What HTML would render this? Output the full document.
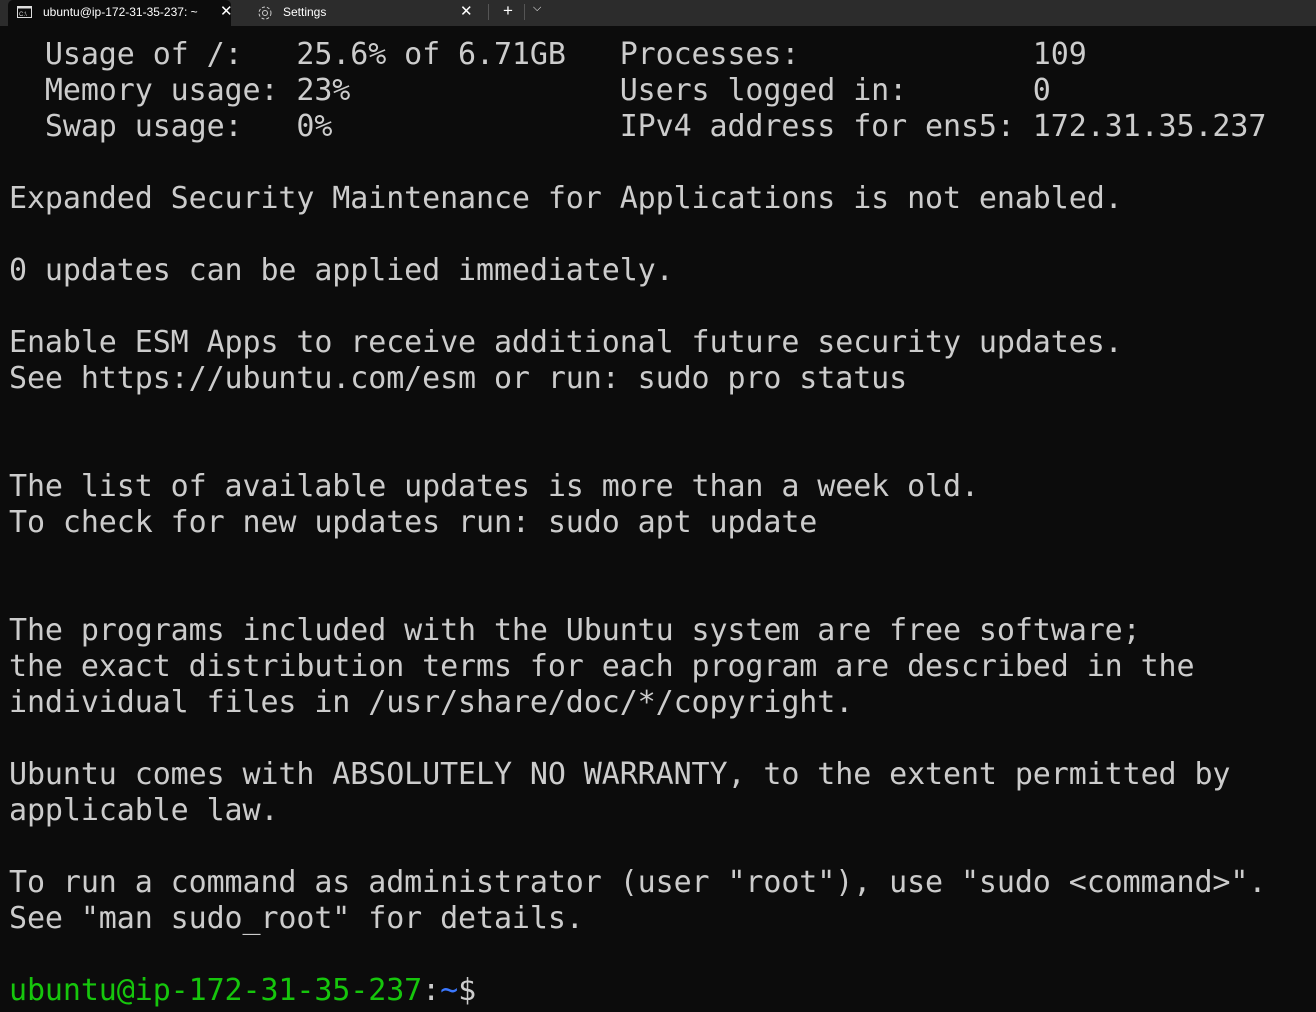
<!DOCTYPE html>
<html><head><style>
html,body{margin:0;padding:0;background:#0c0c0c;width:1316px;height:1012px;overflow:hidden}
.bar{position:absolute;left:0;top:0;width:1316px;height:26px;background:#2c2c2c;font-family:"Liberation Sans",sans-serif;font-size:12px;color:#fff}
.tab1{position:absolute;left:8px;top:0;width:223px;height:27px;background:#0c0c0c;border-radius:5px 5px 0 0}
.t{position:absolute;top:5px;white-space:nowrap}
pre{position:absolute;left:9px;top:37px;margin:0;font-family:"DejaVu Sans Mono","Liberation Mono",monospace;font-size:30px;letter-spacing:-0.1px;line-height:36px;color:#cccccc}
.g{color:#16c60c}.b{color:#3b78ff}
</style></head><body>
<div class="bar">
<div class="tab1"></div>
<svg style="position:absolute;left:17px;top:6px" width="15" height="12"><rect x="0.5" y="0.5" width="14" height="11" fill="none" stroke="#ddd"/><rect x="0.5" y="0.5" width="14" height="2" fill="#ddd"/><text x="2" y="10" font-size="6" fill="#ddd" font-family="Liberation Sans">C:\_</text></svg>
<span class="t" style="left:43px">ubuntu@ip-172-31-35-237: ~</span>
<span class="t" style="left:220px;top:2px;font-size:15px">✕</span>
<svg style="position:absolute;left:256px;top:4px" width="18" height="18" viewBox="0 0 18 18"><circle cx="9" cy="9" r="2.5" fill="none" stroke="#ccc"/><circle cx="9" cy="9" r="6" fill="none" stroke="#ccc" stroke-dasharray="3 2"/></svg>
<span class="t" style="left:283px">Settings</span>
<span class="t" style="left:460px;top:2px;font-size:15px">✕</span>
<div style="position:absolute;left:488px;top:4px;width:1px;height:16px;background:#555"></div>
<span class="t" style="left:503px;top:1px;font-size:17px">+</span>
<div style="position:absolute;left:524px;top:4px;width:1px;height:16px;background:#555"></div>
<span class="t" style="left:533px;top:2px;font-size:11px">⌵</span>
</div>
<pre>  Usage of /:   25.6% of 6.71GB   Processes:             109
  Memory usage: 23%               Users logged in:       0
  Swap usage:   0%                IPv4 address for ens5: 172.31.35.237

Expanded Security Maintenance for Applications is not enabled.

0 updates can be applied immediately.

Enable ESM Apps to receive additional future security updates.
See https://ubuntu.com/esm or run: sudo pro status


The list of available updates is more than a week old.
To check for new updates run: sudo apt update


The programs included with the Ubuntu system are free software;
the exact distribution terms for each program are described in the
individual files in /usr/share/doc/*/copyright.

Ubuntu comes with ABSOLUTELY NO WARRANTY, to the extent permitted by
applicable law.

To run a command as administrator (user "root"), use "sudo &lt;command&gt;".
See "man sudo_root" for details.

<span class="g">ubuntu@ip-172-31-35-237</span>:<span class="b">~</span>$</pre>
</body></html>
